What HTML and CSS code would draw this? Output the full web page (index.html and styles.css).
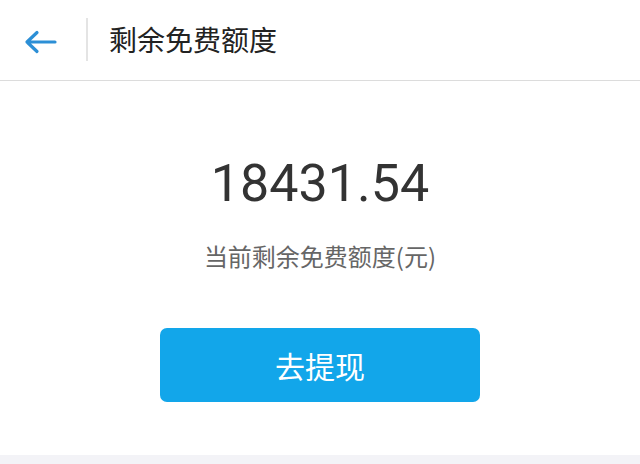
FILE: index.html
```html
<!DOCTYPE html>
<html lang="zh">
<head>
<meta charset="utf-8">
<link rel="stylesheet" href="styles.css">
</head>
<body>
<div class="page">
  <header class="bar">
    <div class="back">
      <svg width="34" height="24" viewBox="0 0 34 24"><path d="M3 12 H31 M13 2.5 L3 12 L13 21.5" fill="none" stroke="#2c8fd6" stroke-width="3.2" stroke-linecap="round" stroke-linejoin="round"/></svg>
    </div>
    <div class="sep"></div>
    <h1 class="title">剩余免费额度</h1>
  </header>
  <main class="content">
    <div class="amount">18431.54</div>
    <div class="label">当前剩余免费额度(元)</div>
    <button class="btn">去提现</button>
  </main>
  <div class="foot"></div>
</div>
</body>
</html>
```
FILE: styles.css
```css
html, body { margin: 0; padding: 0; }
body {
  width: 640px; height: 464px; overflow: hidden; background: #fff;
  font-family: "Noto Sans CJK SC", "Noto Sans", sans-serif;
}
.page { display: flex; flex-direction: column; height: 464px; }
.bar {
  height: 80px; display: flex; align-items: center;
  border-bottom: 1px solid #dcdcdc; box-sizing: content-box;
}
.back { width: 86px; display: flex; padding-left: 24px; box-sizing: border-box; margin-top: 4px; }
.back svg { display: block; }
.sep { width: 2px; height: 43px; background: #e4e4e4; margin-top: -2px; }
.title { margin: -2px 0 0 21px; font-size: 28px; font-weight: 400; color: #222; line-height: 1; }
.content { flex: 1; display: flex; flex-direction: column; align-items: center; }
.amount {
  margin-top: 73px; font-family: Roboto, "Noto Sans", sans-serif;
  font-size: 52px; color: #333; line-height: 60px;
}
.label { margin-top: 27px; font-size: 24px; color: #666; line-height: 30px; }
.btn {
  margin-top: 57px; width: 320px; height: 74px; border: 0; border-radius: 7px;
  background: #12a6ea; color: #fff; font-size: 30px;
  font-family: "Noto Sans CJK SC", sans-serif; padding: 0;
}
.foot { margin-top: auto; height: 9px; background: #f3f3f7; }
```
